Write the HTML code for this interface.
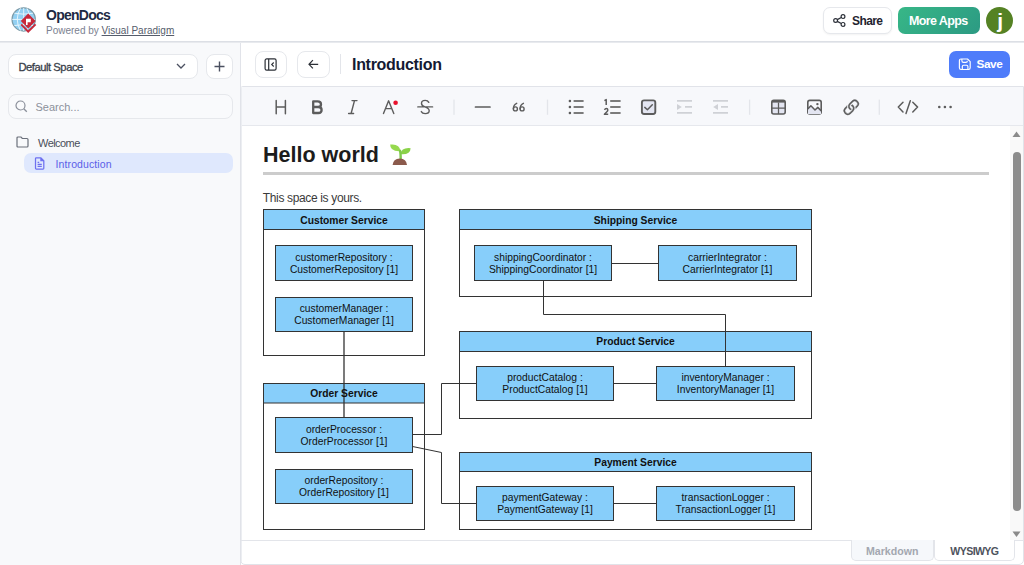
<!DOCTYPE html>
<html><head><meta charset="utf-8">
<style>
*{margin:0;padding:0;box-sizing:border-box}
html,body{width:1024px;height:565px;overflow:hidden;background:#fff;font-family:"Liberation Sans",sans-serif}
.a{position:absolute}
.t{position:absolute;white-space:nowrap}
svg{position:absolute;overflow:visible}
</style></head><body>
<!-- HEADER -->
<div class="a" style="left:0;top:0;width:1024px;height:42px;background:#fff;border-bottom:1px solid #dcdfe5"></div>
<div class="a" style="left:0;top:42px;width:1024px;height:1px;background:#e8eaee"></div>
<svg style="left:8px;top:4px" width="32" height="32" viewBox="8 4 32 32">
 <circle cx="23.7" cy="19.4" r="11.6" fill="#92d0f2" stroke="#7d9ba8" stroke-width="1.3"/>
 <g stroke="#f2faff" stroke-width="0.9" fill="none" opacity="0.95">
  <path d="M20.5 8.2 Q14 19.4 20.5 30.6"/>
  <path d="M26.9 8.2 Q33.4 19.4 26.9 30.6"/>
  <line x1="23.7" y1="8" x2="23.7" y2="31"/>
  <line x1="12.2" y1="19.4" x2="35.2" y2="19.4"/>
  <path d="M14.3 13.2 Q23.7 15.2 33.1 13.2"/>
  <path d="M14.3 25.6 Q23.7 23.6 33.1 25.6"/>
 </g>
 <path d="M28.2 13.6 L35.6 21 L28.2 28.4 L20.8 21 Z" fill="#c8283a"/>
 <path d="M26 18.8 H30.8 V22.2 H27.6 V25 H26 Z" fill="#fff"/>
 <path d="M21.2 24.4 L28.2 31.6 L35.6 24.4" stroke="#c8283a" stroke-width="2" fill="none"/>
</svg>
<div class="t" style="left:46px;top:8.2px;font-size:14px;line-height:14px;font-weight:bold;color:#1e2a44;letter-spacing:-0.75px">OpenDocs</div>
<div class="t" style="left:46px;top:25.7px;font-size:10px;line-height:10px;color:#7b8190">Powered by <span style="text-decoration:underline;color:#555c6b">Visual Paradigm</span></div>

<div class="a" style="left:823px;top:7px;width:69px;height:27px;border:1px solid #e6e8ec;border-radius:7px;background:#fff;box-shadow:0 1px 2px rgba(0,0,0,0.05)"></div>
<svg style="left:833px;top:14px" width="13" height="13" viewBox="0 0 13 13">
 <g fill="none" stroke="#2b2f38" stroke-width="1.2">
 <circle cx="10" cy="2.6" r="1.9"/><circle cx="2.6" cy="6.5" r="1.9"/><circle cx="10" cy="10.4" r="1.9"/>
 <line x1="4.3" y1="5.6" x2="8.3" y2="3.5"/><line x1="4.3" y1="7.4" x2="8.3" y2="9.5"/></g>
</svg>
<div class="t" style="left:852px;top:14.8px;font-size:12px;line-height:12px;font-weight:bold;color:#1f2430;letter-spacing:-0.6px">Share</div>
<div class="a" style="left:898px;top:7px;width:82px;height:27px;border-radius:7px;background:linear-gradient(135deg,#37b787,#2c9a83)"></div>
<div class="t" style="left:909px;top:14.6px;font-size:12.5px;line-height:12.5px;font-weight:bold;color:#fff;letter-spacing:-0.6px">More Apps</div>
<div class="a" style="left:986px;top:7px;width:27px;height:27px;border-radius:50%;background:#558224"></div>
<div class="t" style="left:997.3px;top:9.6px;font-size:21px;line-height:21px;font-weight:bold;color:#fff">j</div>

<!-- SIDEBAR -->
<div class="a" style="left:0;top:43px;width:241px;height:522px;background:#f8f9fb;border-right:1px solid #e1e3e9"></div>
<div class="a" style="left:7.5px;top:53.5px;width:190px;height:25px;border:1px solid #e6e8ec;border-radius:8px;background:#fff"></div>
<div class="t" style="left:18.4px;top:61.5px;font-size:11.2px;line-height:11.2px;color:#3a3f4b;letter-spacing:-0.45px;-webkit-text-stroke:0.3px #3a3f4b">Default Space</div>
<svg style="left:176px;top:63px" width="10" height="6" viewBox="0 0 10 6"><path d="M1 1 L5 5 L9 1" fill="none" stroke="#4b5060" stroke-width="1.3"/></svg>
<div class="a" style="left:205.5px;top:53.5px;width:27px;height:25px;border:1px solid #e6e8ec;border-radius:8px;background:#fff"></div>
<svg style="left:213.5px;top:61px" width="11" height="11" viewBox="0 0 11 11"><path d="M5.5 0.5 V10.5 M0.5 5.5 H10.5" fill="none" stroke="#4b5060" stroke-width="1.4"/></svg>
<div class="a" style="left:7.5px;top:93.5px;width:225px;height:25px;border:1px solid #e6e8ec;border-radius:8px;background:#f9fafc"></div>
<svg style="left:14.5px;top:100px" width="13" height="13" viewBox="0 0 13 13"><circle cx="5.5" cy="5.5" r="4.5" fill="none" stroke="#8a8f9a" stroke-width="1.2"/><line x1="8.8" y1="8.8" x2="11.8" y2="11.8" stroke="#8a8f9a" stroke-width="1.3"/></svg>
<div class="t" style="left:35.5px;top:101.5px;font-size:11px;line-height:11px;color:#8c919b">Search...</div>

<svg style="left:16px;top:136px" width="13" height="12" viewBox="0 0 13 12"><path d="M1 2 Q1 1 2 1 H5 L6.3 2.5 H11 Q12 2.5 12 3.5 V10 Q12 11 11 11 H2 Q1 11 1 10 Z" fill="none" stroke="#6b707b" stroke-width="1.2"/></svg>
<div class="t" style="left:38px;top:137.8px;font-size:11px;line-height:11px;color:#4a4f5a;letter-spacing:-0.55px">Welcome</div>
<div class="a" style="left:24px;top:152.75px;width:208.75px;height:20.25px;border-radius:7px;background:#dfe8fd"></div>
<svg style="left:34px;top:156.5px" width="11" height="13" viewBox="0 0 11 13"><path d="M1.5 1.6 Q1.5 0.8 2.3 0.8 H6.9 L9.8 3.7 V11.2 Q9.8 12 9 12 H2.3 Q1.5 12 1.5 11.2 Z M6.9 0.8 V3.7 H9.8" fill="none" stroke="#6e70f0" stroke-width="1.25"/><path d="M3.6 5.3 H5.2 M3.6 7.4 H7.8 M3.6 9.4 H7.8" fill="none" stroke="#6e70f0" stroke-width="1.2"/></svg>
<div class="t" style="left:55.6px;top:159px;font-size:10.5px;line-height:10.5px;color:#5a5ee8;letter-spacing:0.1px">Introduction</div>

<!-- EDITOR TITLE BAR -->
<div class="a" style="left:254.5px;top:50.5px;width:32px;height:27px;border:1px solid #e6e8ec;border-radius:8px;background:#fff"></div>
<svg style="left:264px;top:58px" width="13" height="13" viewBox="0 0 13 13"><rect x="1.1" y="0.9" width="11" height="11.2" rx="1.6" fill="none" stroke="#2b2f36" stroke-width="1.2"/><line x1="4.7" y1="0.9" x2="4.7" y2="12.1" stroke="#2b2f36" stroke-width="1.2"/><path d="M9.7 4.5 L7.7 6.5 L9.7 8.5" fill="none" stroke="#2b2f36" stroke-width="1.1"/></svg>
<div class="a" style="left:297px;top:50.5px;width:32.5px;height:27px;border:1px solid #e6e8ec;border-radius:8px;background:#fff"></div>
<svg style="left:308px;top:59px" width="11" height="11" viewBox="0 0 11 11"><path d="M10.2 5.3 H1.2 M4.9 1.2 L1 5.3 L4.9 9.4" fill="none" stroke="#2b2f36" stroke-width="1.2"/></svg>
<div class="a" style="left:340px;top:54px;width:1px;height:20px;background:#e3e5ea"></div>
<div class="t" style="left:352px;top:56.7px;font-size:16px;line-height:16px;font-weight:bold;color:#141a33;letter-spacing:-0.3px">Introduction</div>
<div class="a" style="left:949px;top:50.5px;width:61px;height:27.5px;border-radius:7px;background:#4e7cfa"></div>
<svg style="left:954px;top:54px" width="20" height="20" viewBox="954 54 20 20"><g fill="none" stroke="#fff" stroke-width="1.15" stroke-linejoin="round"><path d="M961 59 H967.5 L970.2 61.7 V67.8 Q970.2 69.5 968.5 69.5 H961 Q959.4 69.5 959.4 67.8 V60.6 Q959.4 59 961 59 Z"/><path d="M961.9 59.1 V60.8 Q961.9 62.4 963.5 62.4 H965.9 Q967.4 62.4 967.4 60.8"/><path d="M962.3 69.4 V66.6 Q962.3 65.2 963.7 65.2 H966.5 Q967.9 65.2 967.9 66.6 V69.4"/></g></svg>
<div class="t" style="left:976.5px;top:59px;font-size:11.8px;line-height:11.8px;font-weight:bold;color:#fff;letter-spacing:-0.45px">Save</div>

<!-- EDITOR FRAME -->
<div class="a" style="left:240px;top:86px;width:784px;height:479px;border:1px solid #e1e3e9;border-radius:3px 0 5px 5px;background:#fff"></div>
<div class="a" style="left:241px;top:87px;width:782px;height:38.5px;background:#f7f8fb;border-bottom:1px solid #e6e8ed;border-radius:2px 0 0 0"></div>

<div class="a" style="left:241px;top:88px;width:1px;height:474px;background:#eceef2"></div>
<!--TB--><svg style="left:0;top:0" width="1024" height="565" viewBox="0 0 1024 565"><g fill="none" stroke="#5c5c5c" stroke-linecap="round" stroke-linejoin="round">
<path d="M276.2 100.5 V113.7 M285.4 100.5 V113.7 M276.2 106.9 H285.4" stroke-width="1.5"/>
<path d="M313.2 101.4 H317.6 Q321 101.4 321 104.4 Q321 107 317.8 107 H313.2 Z M313.2 107 H318.4 Q321.6 107 321.6 110 Q321.6 113 318.4 113 H313.2 Z" stroke-width="2.3"/>
<path d="M352 100.6 H357 M348.6 113.5 H353.6 M354.5 100.6 L351.1 113.5" stroke-width="1.4"/>
<path d="M383.5 113.5 L388.6 100.8 L393.8 113.5 M385.4 108.6 H391.8" stroke-width="1.4"/>
<circle cx="395.6" cy="102.8" r="2.3" fill="#e8112d" stroke="none"/>
<path d="M428.8 102.3 Q427.8 100.4 425.2 100.4 Q421.5 100.4 421.5 103.4 Q421.5 105.6 425 106.9 Q429.2 108.4 429.2 110.8 Q429.2 113.6 425.2 113.6 Q422.3 113.6 421.3 111.6 M417.8 106.9 H432.6" stroke-width="1.4"/>
<path d="M475.5 107 H490" stroke-width="1.7"/>
<circle cx="569.9" cy="101" r="1.3" fill="#5c5c5c" stroke="none"/>
<path d="M573.6 101 H583.6" stroke-width="1.6" stroke-linecap="butt"/>
<circle cx="569.9" cy="107" r="1.3" fill="#5c5c5c" stroke="none"/>
<path d="M573.6 107 H583.6" stroke-width="1.6" stroke-linecap="butt"/>
<circle cx="569.9" cy="113" r="1.3" fill="#5c5c5c" stroke="none"/>
<path d="M573.6 113 H583.6" stroke-width="1.6" stroke-linecap="butt"/>
<path d="M610.2 101 H620.6" stroke-width="1.6" stroke-linecap="butt"/>
<path d="M610.2 107 H620.6" stroke-width="1.6" stroke-linecap="butt"/>
<path d="M610.2 113 H620.6" stroke-width="1.6" stroke-linecap="butt"/>
<rect x="641.9" y="100.4" width="13.4" height="13.6" rx="2.2" fill="#e3e5f1" stroke-width="1.9"/>
<path d="M644.8 107.4 L647.4 109.8 L652.3 104.7" stroke-width="1.5"/>
<g stroke="#cfd1d6" stroke-width="1.7" stroke-linecap="butt"><path d="M677 100.9 H692 M685 106.9 H692 M677 112.8 H692"/></g>
<path d="M677 104 L681.8 107 L677 110 Z" fill="#cfd1d6" stroke="none"/>
<g stroke="#cfd1d6" stroke-width="1.7" stroke-linecap="butt"><path d="M713 100.9 H728 M721 106.9 H728 M713 112.8 H728"/></g>
<path d="M718 104 L713.2 107 L718 110 Z" fill="#cfd1d6" stroke="none"/>
<rect x="771.8" y="100.4" width="13.4" height="13.6" rx="2" fill="#e3e5f1" stroke-width="1.6"/>
<path d="M772 101.4 H785" stroke-width="2.4" stroke-linecap="butt"/>
<path d="M778.5 102.5 V114 M771.8 108 H785.2" stroke-width="1.25" stroke-linecap="butt"/>
<rect x="807.8" y="100.4" width="13.4" height="13.6" rx="2" fill="none" stroke-width="1.6"/>
<path d="M808 108.8 L810.9 105.8 L815 110 L817.8 107.4 L821 110.6 V113.9 H808 Z" fill="#e3e5f1" stroke="none"/>
<path d="M808 108.8 L810.9 105.8 L815 110 L817.8 107.4 L821 110.6" stroke-width="1.5"/>
<circle cx="817.4" cy="104.1" r="1.2" fill="#5c5c5c" stroke="none"/>
<g transform="translate(840.4 97.1) scale(1.36)" fill="#5c5c5c" stroke="#5c5c5c" stroke-width="0.3"><path d="M4.715 6.542 3.343 7.914a3 3 0 1 0 4.243 4.243l1.828-1.829A3 3 0 0 0 8.586 5.5L8 6.086a1 1 0 0 0-.154.199 2 2 0 0 1 .861 3.337L6.88 11.45a2 2 0 1 1-2.83-2.83l.793-.792a4 4 0 0 1-.128-1.287z"/><path d="M6.586 4.672A3 3 0 0 0 7.414 9.5l.775-.776a2 2 0 0 1-.896-3.346L9.12 3.55a2 2 0 1 1 2.83 2.83l-.793.792c.112.42.155.855.128 1.287l1.372-1.372a3 3 0 1 0-4.243-4.243z"/></g>
<path d="M903 102.3 L898.3 107.1 L903 112 M912.8 102.3 L917.6 107.1 L912.8 112 M910.3 100.8 L906 113.5" stroke-width="1.5"/>
<circle cx="939.3" cy="107" r="1.3" fill="#5c5c5c" stroke="none"/>
<circle cx="944.9" cy="107" r="1.3" fill="#5c5c5c" stroke="none"/>
<circle cx="950.6" cy="107" r="1.3" fill="#5c5c5c" stroke="none"/>
</g>
<g fill="none" stroke="#5c5c5c" stroke-width="1.4"><circle cx="515.4" cy="108.9" r="2.0"/><path d="M513.35 108.7 Q513.5 104.8 516.6999999999999 103.3" stroke-linecap="round"/></g>
<g fill="none" stroke="#5c5c5c" stroke-width="1.4"><circle cx="522.1" cy="108.9" r="2.0"/><path d="M520.0500000000001 108.7 Q520.2 104.8 523.4 103.3" stroke-linecap="round"/></g>
<path d="M604.4 100.6 L606.2 99.6 V104.9" fill="none" stroke="#5c5c5c" stroke-width="1.5" stroke-linejoin="round"/>
<path d="M604.5 109.8 Q605.2 108.5 606.3 108.5 Q607.8 108.5 607.8 110 Q607.8 110.9 606.9 111.7 L604.4 114.2 H608.2" fill="none" stroke="#5c5c5c" stroke-width="1.5" stroke-linejoin="round"/>
<rect x="453.35" y="99.6" width="1.3" height="15.2" fill="#e3e5ea"/>
<rect x="546.85" y="99.6" width="1.3" height="15.2" fill="#e3e5ea"/>
<rect x="748.95" y="99.6" width="1.3" height="15.2" fill="#e3e5ea"/>
<rect x="878.65" y="99.6" width="1.3" height="15.2" fill="#e3e5ea"/>
</svg><!--/TB-->

<!-- SCROLLBAR -->
<div class="a" style="left:1010px;top:126px;width:13px;height:414px;background:#f9f9f9"></div>
<svg style="left:1012px;top:131px" width="9" height="7" viewBox="0 0 9 7"><path d="M4.5 0.5 L8.5 6 H0.5 Z" fill="#8a8a8a"/></svg>
<div class="a" style="left:1013px;top:152px;width:8px;height:359px;border-radius:4px;background:#8c8c8c"></div>
<svg style="left:1012px;top:530.5px" width="9" height="7" viewBox="0 0 9 7"><path d="M0.5 0.5 H8.5 L4.5 6 Z" fill="#8a8a8a"/></svg>

<!-- BOTTOM BAR -->
<div class="a" style="left:241px;top:540px;width:782px;height:1px;background:#e3e5ea"></div>
<div class="a" style="left:851px;top:540px;width:83px;height:20.5px;border:1px solid #e3e5ea;border-top:none;border-radius:0 0 5px 5px;background:#f6f8fb"></div>
<div class="t" style="left:866px;top:545.8px;font-size:10.6px;line-height:10.6px;font-weight:bold;color:#a3a7b0;letter-spacing:0px">Markdown</div>
<div class="a" style="left:933.5px;top:540px;width:81.5px;height:20.5px;border:1px solid #e3e5ea;border-top:none;border-radius:0 0 5px 5px;background:#fff"></div>
<div class="t" style="left:950.3px;top:545.8px;font-size:10.6px;line-height:10.6px;font-weight:bold;color:#4e535d;letter-spacing:-0.6px">WYSIWYG</div>

<!-- CONTENT -->
<div class="t" style="left:263px;top:145px;font-size:21.5px;line-height:21.5px;font-weight:bold;color:#1c1c1c;letter-spacing:0px">Hello world</div>
<svg style="left:389px;top:143px" width="22" height="23" viewBox="0 0 22 23">
 <path d="M11.6 8.2 Q10.5 0.4 1.2 1.6 Q0.8 8.8 11.6 8.2Z" fill="#96d94e"/>
 <path d="M11.2 11.2 Q12.6 4.2 21.6 5.2 Q21.4 12.2 11.2 11.2Z" fill="#8ad248"/>
 <path d="M10.8 7 Q11.7 9 11.7 16.5" stroke="#7fc94b" stroke-width="2.4" fill="none"/>
 <path d="M3.6 22 Q4.2 15.4 10.8 15.4 Q17.4 15.4 18 22 Z" fill="#8b5a4c"/>
</svg>
<div class="a" style="left:263px;top:172px;width:726px;height:3px;background:#cccccc"></div>
<div class="t" style="left:262.8px;top:191.5px;font-size:12px;line-height:12px;color:#3a3a3a;letter-spacing:-0.35px">This space is yours.</div>

<!--DIAG--><svg style="left:0;top:0" width="1024" height="565" viewBox="0 0 1024 565">
<g fill="none" stroke="#333" stroke-width="1">
<rect x="263.5" y="209.5" width="161.0" height="146.0" fill="#fff"/>
<rect x="263.5" y="209.5" width="161.0" height="20.0" fill="#87cefa"/>
<rect x="263.5" y="383.5" width="161.0" height="146.0" fill="#fff"/>
<rect x="263.5" y="383.5" width="161.0" height="19.5" fill="#87cefa"/>
<rect x="459.5" y="209.5" width="352.0" height="87.0" fill="#fff"/>
<rect x="459.5" y="209.5" width="352.0" height="20.0" fill="#87cefa"/>
<rect x="459.5" y="331.5" width="352.0" height="87.0" fill="#fff"/>
<rect x="459.5" y="331.5" width="352.0" height="20.0" fill="#87cefa"/>
<rect x="459.5" y="452.5" width="352.0" height="77.0" fill="#fff"/>
<rect x="459.5" y="452.5" width="352.0" height="19.0" fill="#87cefa"/>
<rect x="275.5" y="245.5" width="137.0" height="35.0" fill="#87cefa"/>
<rect x="275.5" y="297.5" width="137.0" height="34.0" fill="#87cefa"/>
<rect x="275.5" y="417.5" width="137.0" height="35.0" fill="#87cefa"/>
<rect x="275.5" y="469.5" width="137.0" height="34.0" fill="#87cefa"/>
<rect x="474.5" y="245.5" width="137.0" height="35.0" fill="#87cefa"/>
<rect x="658.5" y="245.5" width="138.0" height="35.0" fill="#87cefa"/>
<rect x="476.5" y="366.5" width="137.0" height="34.0" fill="#87cefa"/>
<rect x="656.5" y="366.5" width="138.0" height="34.0" fill="#87cefa"/>
<rect x="476.5" y="486.5" width="137.0" height="34.0" fill="#87cefa"/>
<rect x="656.5" y="486.5" width="138.0" height="34.0" fill="#87cefa"/>
<polyline points="611.5,263.5 658.5,263.5"/>
<polyline points="543.5,280.5 543.5,314.5 725.5,314.5 725.5,366.5"/>
<polyline points="613.5,383.5 656.5,383.5"/>
<polyline points="613.5,503.5 656.5,503.5"/>
<polyline points="344,331.5 344,417.5" stroke-width="1.3"/>
<polyline points="412.5,434.5 441.5,434.5 441.5,383.5 476.5,383.5"/>
<polyline points="412.5,446.5 441.5,452.5 441.5,503.5 476.5,503.5"/>
</g>
<g font-family="Liberation Sans" font-size="10.3" fill="#111" text-anchor="middle" stroke="none">
<text x="344.0" y="223.5" font-weight="bold">Customer Service</text>
<text x="344.0" y="397.3" font-weight="bold">Order Service</text>
<text x="635.5" y="223.5" font-weight="bold">Shipping Service</text>
<text x="635.5" y="344.7" font-weight="bold">Product Service</text>
<text x="635.5" y="465.8" font-weight="bold">Payment Service</text>
<text x="344.0" y="260.8">customerRepository :</text>
<text x="344.0" y="272.8">CustomerRepository [1]</text>
<text x="344.0" y="312.1">customerManager :</text>
<text x="344.0" y="324.1">CustomerManager [1]</text>
<text x="344.0" y="432.7">orderProcessor :</text>
<text x="344.0" y="444.7">OrderProcessor [1]</text>
<text x="344.0" y="483.7">orderRepository :</text>
<text x="344.0" y="495.7">OrderRepository [1]</text>
<text x="543.0" y="260.5">shippingCoordinator :</text>
<text x="543.0" y="272.5">ShippingCoordinator [1]</text>
<text x="727.5" y="260.5">carrierIntegrator :</text>
<text x="727.5" y="272.5">CarrierIntegrator [1]</text>
<text x="545.0" y="380.7">productCatalog :</text>
<text x="545.0" y="392.7">ProductCatalog [1]</text>
<text x="725.5" y="380.7">inventoryManager :</text>
<text x="725.5" y="392.7">InventoryManager [1]</text>
<text x="545.0" y="500.9">paymentGateway :</text>
<text x="545.0" y="512.9">PaymentGateway [1]</text>
<text x="725.5" y="500.9">transactionLogger :</text>
<text x="725.5" y="512.9">TransactionLogger [1]</text>
</g></svg><!--/DIAG-->
</body></html>
